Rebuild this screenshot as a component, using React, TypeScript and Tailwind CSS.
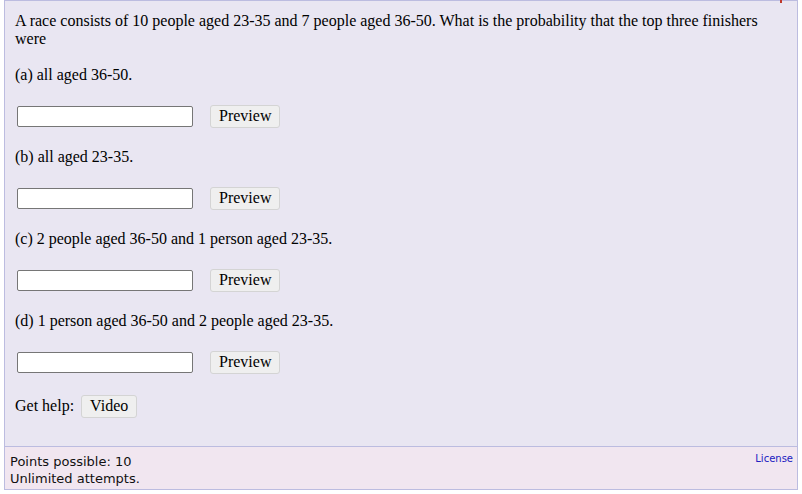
export default function App() {
  const parts = [
    "(a) all aged 36-50.",
    "(b) all aged 23-35.",
    "(c) 2 people aged 36-50 and 1 person aged 23-35.",
    "(d) 1 person aged 36-50 and 2 people aged 23-35.",
  ];
  return (
    <div className="relative w-[802px] h-[494px] bg-white">
      {/* clipped marker at the top edge */}
      <div className="absolute left-[780px] top-0 w-[2px] h-[3px] bg-[#c0392b]" />
      <div className="ml-[4px] w-[794px] border border-[#bcbce0]">
        {/* question body */}
        <div className="bg-[#e9e6f2] pl-[10px] pr-[10px] pt-[11px] pb-[28px] font-['Liberation_Serif',serif] text-[16px] leading-[18px] text-black">
          <p>
            A race consists of 10 people aged 23-35 and 7 people aged 36-50. What is the
            probability that the top three finishers were
          </p>
          {parts.map((t, i) => (
            <div key={i}>
              <p className={i === 0 ? "mt-[18px]" : "mt-[20px]"}>{t}</p>
              <div className="mt-[20px] flex h-[24px] items-center">
                <input
                  type="text"
                  className="ml-[2px] h-[21px] w-[176px] rounded-[2px] border border-[#767676] bg-white"
                />
                <button className="ml-[17px] h-[23px] rounded-[3px] border border-[#d4d4d4] bg-[#efefef] px-[8px] text-[16px] leading-[18px]">
                  Preview
                </button>
              </div>
            </div>
          ))}
          <div className="mt-[20px] flex h-[24px] items-center">
            <span>Get help:</span>
            <button className="ml-[7px] h-[23px] rounded-[3px] border border-[#d4d4d4] bg-[#efefef] px-[8px] text-[16px] leading-[18px]">
              Video
            </button>
          </div>
        </div>
        {/* footer */}
        <div className="flex justify-between border-t border-[#bcbce0] bg-[#f1e6f0] pl-[5px] pr-[4px] pt-[6px] pb-[2px] font-['DejaVu_Sans',sans-serif] text-[13px] leading-[17px] text-[#111]">
          <div>
            <div>Points possible: 10</div>
            <div>Unlimited attempts.</div>
          </div>
          <a className="text-[10px] leading-[12px] text-[#2020c0]" href="#">
            License
          </a>
        </div>
      </div>
    </div>
  );
}
